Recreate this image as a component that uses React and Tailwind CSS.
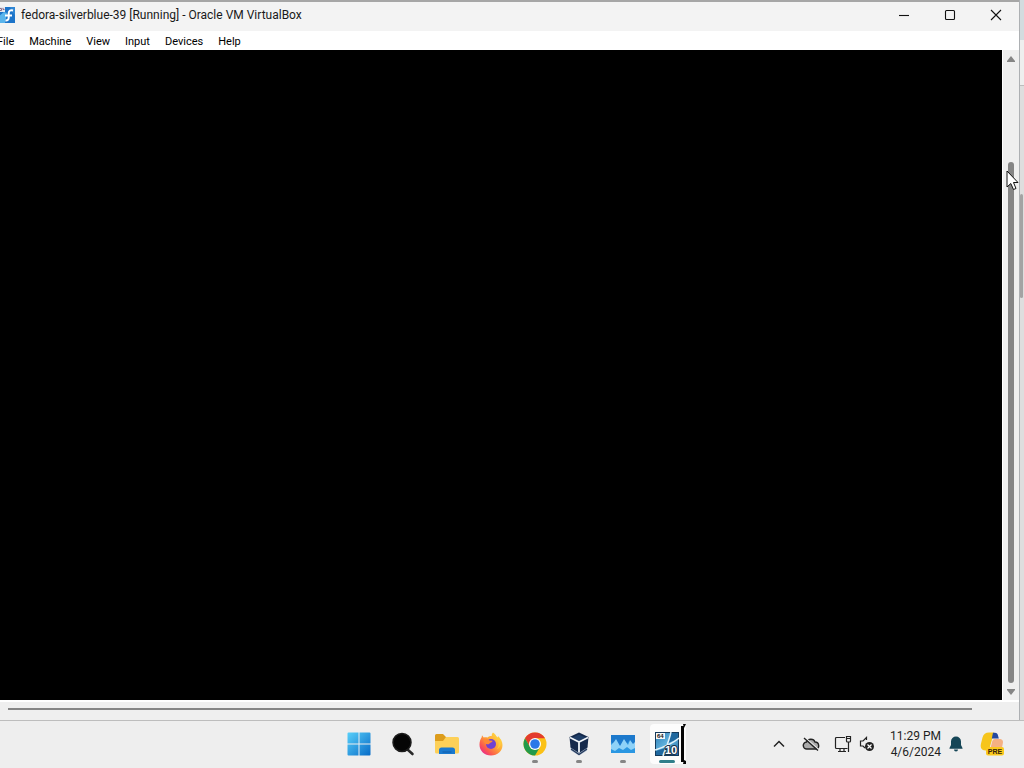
import React from 'react';

const MENUS = ['File', 'Machine', 'View', 'Input', 'Devices', 'Help'];

const VmIcon = () => (
  <svg viewBox="0 0 16 16" className="-ml-px h-4 w-4 shrink-0" aria-hidden="true">
    <rect width="16" height="16" fill="#1c74c9" />
    <path d="M0 16V9l5-4 3 1-2 10z" fill="#58b4ec" />
    <path d="M11 0h5v8l-2-2z" fill="#2f86d4" />
    <path d="M14 3.500c-3-.8-4.300.6-4.300 3v4c0 2-1 3.200-3.200 3M6 8.500h7" fill="none" stroke="#fff" strokeWidth="2" />
    <path d="M0 0h6v5H0z" fill="#e3e6ee" />
    <path d="M1 1.500h1.500v2H1M4 1v1.500h1.500" fill="none" stroke="#8c6c86" />
  </svg>
);

const StartIcon = () => (
  <svg viewBox="0 0 24 24" className="h-6 w-6" aria-hidden="true">
    <defs>
      <linearGradient id="start" x1="0" y1="0" x2="24" y2="24" gradientUnits="userSpaceOnUse">
        <stop offset="0" stopColor="#5ad2fb" />
        <stop offset="1" stopColor="#0669c6" />
      </linearGradient>
    </defs>
    <path fill="url(#start)" d="M.5 1.500A1 1 0 0 1 1.500.5H11.500v11H.5zM12.500.5h10a1 1 0 0 1 1 1v10h-11zM.5 12.500h11v11h-10a1 1 0 0 1-1-1zM12.500 12.500h11v10a1 1 0 0 1-1 1h-10z" />
  </svg>
);

const SearchIcon = () => (
  <svg viewBox="0 0 24 24" className="h-6 w-6" aria-hidden="true">
    <path d="M16.500 17.500l5 4.500" stroke="#2a2a2a" strokeWidth="2.600" strokeLinecap="round" />
    <circle cx="11" cy="10.500" r="9" fill="#050505" stroke="#1c1c1c" strokeWidth="1.500" />
  </svg>
);

const FolderIcon = () => (
  <svg viewBox="0 0 26 24" className="h-6 w-[26px]" aria-hidden="true">
    <path d="M1 3.500A1.500 1.500 0 0 1 2.500 2H9l3 3h8v6H1z" fill="#dc9c1c" />
    <path d="M1 9h8l3-4h11.500A1.500 1.500 0 0 1 25 6.500v13.500a1.500 1.500 0 0 1-1.500 1.500h-21A1.500 1.500 0 0 1 1 20z" fill="#fdd058" />
    <path d="M5 22v-4.500A2.500 2.500 0 0 1 7.500 15.500h11a2.500 2.500 0 0 1 2.500 2.500V22z" fill="#1979cf" />
    <path d="M8.500 20h9" stroke="#1466b6" strokeWidth="1.500" />
  </svg>
);

const FirefoxIcon = () => (
  <svg viewBox="0 0 24 24" className="h-6 w-6" aria-hidden="true">
    <defs>
      <linearGradient id="fox" x1="21" y1="3" x2="4" y2="21" gradientUnits="userSpaceOnUse">
        <stop offset="0" stopColor="#ffe04a" />
        <stop offset=".45" stopColor="#ffa436" />
        <stop offset=".8" stopColor="#fb5a4e" />
        <stop offset="1" stopColor="#ec2f86" />
      </linearGradient>
    </defs>
    <path d="M14 .5c2 1.200 3 2.700 3.400 4.300.8.300 1.400.7 1.800 1.200l-.4-2c2.800 2.300 4.700 5.500 4.700 9 0 6.200-5 10.500-11.500 10.500S.5 18.800.5 12.700c0-3 .9-5.600 2.200-7.400l.3-2 1.700 2.200c1.300-.5 2.600-.5 3.800 0C9.800 4.400 11 4 12.800 4 12.500 2.800 13 1.500 14 .5z" fill="url(#fox)" />
    <circle cx="12" cy="12" r="5" fill="#7142d1" />
    <path d="M4.500 7.500c2-1.400 4.500-1 6 1l3 .3c0 1.900-3 1.900-3.300 3.200-2.500 1-6-1-5.700-4.500z" fill="#ff8b36" />
    <path d="M14 1c0 3 4.500 5 5.500 9 .7 3-.2 5.500-2 7.500 6-3.200 5.500-9.500 1.500-13.300l.2 2C17.500 4 15.500 3.500 14 1z" fill="#ffcb3d" />
  </svg>
);

const ChromeIcon = () => (
  <svg viewBox="0 0 24 24" className="h-6 w-6" aria-hidden="true">
    <circle cx="12" cy="12" r="11.500" fill="#fbc116" />
    <path d="M2 6.300A11.500 11.500 0 0 1 22 6.300H12L7 15z" fill="#e33b2e" />
    <path d="M2 6.300A11.500 11.500 0 0 0 12 23.500l5-8.600-5 2.800-5-2.800z" fill="#239a4b" />
    <circle cx="12" cy="12" r="6" fill="#fff" />
    <circle cx="12" cy="12" r="4.800" fill="#2a78e8" />
  </svg>
);

const VirtualBoxIcon = () => (
  <svg viewBox="0 0 24 24" className="h-6 w-6" aria-hidden="true">
    <path d="M3.500 14L12 19l8.500-5-.5 4.500-8 5-8-5z" fill="#a3b3c9" />
    <path d="M12 .5L21.500 5l-1 10.500L12 21l-8.500-5.500L2.500 5z" fill="#14294b" />
    <path d="M12 2.500l7 3.300-7 3.400-7-3.400z" fill="#1e3d66" />
    <path d="M3 5.500l9 4.500 9-4.500M12 10v10.500" fill="none" stroke="#eef3f8" strokeWidth="1.800" />
    <path d="M4 17l8 5.500 8-5.500" fill="none" stroke="#24385a" strokeWidth="1.200" />
  </svg>
);

const MonitorAppIcon = () => (
  <svg viewBox="0 0 24 20" className="h-5 w-6" aria-hidden="true">
    <path d="M0 1h24v18H0z" fill="#2a97e2" />
    <path d="M0 1h24v8l-3 2-3-4-3 4-3-3-3 5-4-6-2 4-3-3z" fill="#1c79cc" />
    <path d="M0 11l3-3 2-3 4 7 4-7 4 6 2-5 3 4 2-2v6l-4 2-4-3-4 3-4-2-4 3-4-2z" fill="#8ed2f8" />
  </svg>
);

const GuestIcon = () => (
  <svg viewBox="0 0 24 24" className="h-6 w-6" aria-hidden="true">
    <defs>
      <linearGradient id="pane" x1="0" y1="0" x2="24" y2="24" gradientUnits="userSpaceOnUse">
        <stop offset="0" stopColor="#2b7ab4" />
        <stop offset=".5" stopColor="#63b4de" />
        <stop offset="1" stopColor="#1d5f95" />
      </linearGradient>
    </defs>
    <path d="M0 0h24v24H0z" fill="#153a5b" />
    <path d="M1 1h22v22H1z" fill="url(#pane)" />
    <path d="M15 1h8v6l-10 4zM1 19l9-3-3 7H1z" fill="#1f689f" />
    <path d="M16 0c-2 9-5 16-8 24M0 18C9 15 17 12 24 6" fill="none" stroke="#e4f3fa" strokeWidth="1.500" />
    <path d="M1 1h9v6H1z" fill="#f7f7f7" />
    <text x="2" y="6" fontSize="6" fontWeight="700" fontFamily="Liberation Sans, sans-serif" fill="#111">64</text>
    <text x="10" y="22" fontSize="11" fontWeight="700" fontFamily="Liberation Sans, sans-serif" fill="#fff" stroke="#16324c" strokeWidth="2" paintOrder="stroke">10</text>
  </svg>
);

const APPS = [
  { name: 'Start', Icon: StartIcon },
  { name: 'Search', Icon: SearchIcon },
  { name: 'File Explorer', Icon: FolderIcon },
  { name: 'Firefox', Icon: FirefoxIcon },
  { name: 'Chrome', Icon: ChromeIcon, open: true },
  { name: 'VirtualBox', Icon: VirtualBoxIcon, open: true },
  { name: 'Resource Monitor', Icon: MonitorAppIcon, open: true },
  { name: 'Virtual machine', Icon: GuestIcon, active: true },
];

const WindowButton = ({ label, children }) => (
  <button type="button" aria-label={label} className="flex h-7 w-[46px] items-center justify-center">
    <svg viewBox="0 0 12 12" className="h-3 w-3" fill="none" stroke="#111" strokeWidth="1.100">
      {children}
    </svg>
  </button>
);

const TitleBar = () => (
  <header className="flex h-[31px] shrink-0 items-center border-t-2 border-[#a6a6a6] bg-[#f3f3f3] pb-[3px]">
    <VmIcon />
    <h1 className="ml-1.5 flex-1 truncate text-[12px] leading-4 text-[#191919]">
      fedora-silverblue-39 [Running] - Oracle VM VirtualBox
    </h1>
    <WindowButton label="Minimize">
      <path d="M1 6.500h10" />
    </WindowButton>
    <WindowButton label="Maximize">
      <rect x="1.500" y="1.500" width="9" height="9" rx="1" />
    </WindowButton>
    <WindowButton label="Close">
      <path d="M1 1l10 10M11 1L1 11" />
    </WindowButton>
  </header>
);

const MenuBar = () => (
  <nav className="-ml-[3px] flex h-[19px] shrink-0 items-center gap-[15px] bg-white pt-0.5">
    {MENUS.map((menu) => (
      <button key={menu} type="button" className="text-[11px] leading-4 text-black">
        {menu}
      </button>
    ))}
  </nav>
);

const VerticalScrollbar = () => (
  <div className="flex w-[17px] shrink-0 flex-col items-center border-l border-white bg-[#efefef] pt-[3px] pb-0.5">
    <button type="button" aria-label="Scroll up" className="flex h-3 w-3 items-center justify-center">
      <svg viewBox="0 0 8 6" className="h-1.5 w-2">
        <path d="M4 0l4 5v1H0V5z" fill="#858585" />
      </svg>
    </button>
    <div className="flex w-1.5 flex-1 flex-col pt-[97px]">
      <div className="flex-1 rounded-full bg-[#858585]" />
    </div>
    <button type="button" aria-label="Scroll down" className="mt-[3px] flex h-3 w-3 items-center justify-center">
      <svg viewBox="0 0 8 6" className="h-1.5 w-2">
        <path d="M4 6l4-5V0H0v1z" fill="#858585" />
      </svg>
    </button>
  </div>
);

const TrayIcons = () => (
  <>
    <button type="button" aria-label="Show hidden icons" className="flex h-8 w-6 items-center justify-center">
      <svg viewBox="0 0 12 8" className="h-2 w-3" fill="none" stroke="#222" strokeWidth="1.500">
        <path d="M1 6.500l5-5 5 5" />
      </svg>
    </button>
    <button type="button" aria-label="OneDrive" className="ml-2 flex h-8 w-6 items-center justify-center">
      <svg viewBox="0 0 18 14" className="h-3.5 w-[18px]" fill="none" stroke="#222" strokeWidth="1.400">
        <path d="M5 12a3.500 3.500 0 0 1-.5-7C6 1.500 11.500 1 13 5c4.500 0 5 7 1 7z" fill="#aaa" />
        <path d="M3.500 1l13 11.500" stroke="#eee" strokeWidth="1.500" />
        <path d="M2 1l14 12.500" />
      </svg>
    </button>
    <button type="button" aria-label="Network" className="ml-2 flex h-8 w-6 items-center justify-center">
      <svg viewBox="0 0 18 18" className="h-[18px] w-[18px]" fill="none" stroke="#222" strokeWidth="1.200">
        <path d="M11 2.500H2.500a1 1 0 0 0-1 1v9a1 1 0 0 0 1 1h11M6 13.500V16M10 13.500V16M4 16.500h8M14.500 7v10" />
        <path d="M12.500 1.500h4V6a1 1 0 0 1-1 1h-2a1 1 0 0 1-1-1zM12.500 3.500h4" />
      </svg>
    </button>
    <button type="button" aria-label="Volume muted" className="flex h-8 w-6 items-center justify-center">
      <svg viewBox="0 0 16 16" className="h-4 w-4" fill="none" stroke="#222" strokeWidth="1.200">
        <path d="M7.500 4V1.500L4 5H1.500v5H4l2 2" />
        <circle cx="10.500" cy="10.500" r="4.500" fill="#222" stroke="none" />
        <path d="M8.500 8.500l4 4M12.500 8.500l-4 4" stroke="#fff" />
      </svg>
    </button>
  </>
);

const Tray = () => (
  <div className="flex items-center justify-end pr-5 pb-px">
    <TrayIcons />
    <time className="ml-[11px] text-right text-[12px] leading-4 text-[#1f1f1f]">
      <span className="block">11:29 PM</span>
      <span className="block">4/6/2024</span>
    </time>
    <button type="button" aria-label="Notifications" className="ml-2 flex h-8 w-[14px] items-center justify-center">
      <svg viewBox="0 0 14 16" className="h-4 w-3.5" fill="#164657">
        <path d="M7 .5a5 5 0 0 1 5 5V9l1.500 3v.8H.5V12L2 9V5.500a5 5 0 0 1 5-5zM5 13.500h4a2 2 0 0 1-4 0z" />
      </svg>
    </button>
    <button type="button" aria-label="Copilot preview" className="ml-[17px] flex h-8 w-6 items-center justify-center">
      <svg viewBox="0 0 24 24" className="h-6 w-6">
        <path d="M9 .5h5l-4 14c-.8 3-2 4-4.500 4-4 0-5.500-3-4.500-7l1.500-6C3.500 2 5.500.5 9 .5z" fill="#f6c51c" />
        <path d="M13 .7h2c1.500 0 2.300.7 2.800 2l1 3.800h-7z" fill="#2449a0" />
        <path d="M15 7h4c3.500 0 4.500 2 3.800 4.500L21.500 18H10l2-8c.5-2 1.500-3 3-3z" fill="#f5b183" />
        <rect x="6" y="15" width="18" height="8.500" rx="2" fill="#fbc91d" />
        <text x="15" y="22" fontSize="7" fontWeight="700" textAnchor="middle" fontFamily="Liberation Sans, sans-serif" fill="#33230b">PRE</text>
      </svg>
    </button>
  </div>
);

const TaskbarApp = ({ name, Icon, open, active }) => (
  <button
    type="button"
    aria-label={name}
    className="relative flex h-[47px] w-11 items-center justify-center pb-0.5"
  >
    {active && (
      <svg viewBox="0 0 40 40" className="absolute top-[3px] left-[5px] h-10 w-10" aria-hidden="true">
        <rect width="36" height="40" rx="4" fill="#fcfcfc" />
        <path d="M31 2h3v36h-3zM33 0h3l-2 4zM34 36l2 1v3h-3z" fill="#050505" />
      </svg>
    )}
    <span className="relative">
      <Icon />
    </span>
    {open && <span className="absolute bottom-[5px] h-[3px] w-1.5 rounded-full bg-[#858585]" />}
    {active && <span className="absolute bottom-[5px] h-[3px] w-4 rounded-full bg-[#2f7f8a]" />}
  </button>
);

const Taskbar = () => (
  <footer className="grid h-12 shrink-0 grid-cols-[1fr_auto_1fr] border-t border-[#bdbdbd] bg-[#eeeeee]">
    <div />
    <div className="flex pl-px">
      {APPS.map((app) => (
        <TaskbarApp key={app.name} {...app} />
      ))}
    </div>
    <Tray />
  </footer>
);

const App = () => (
  <div className="relative flex h-screen flex-col overflow-hidden bg-[#eeeeee] font-['Roboto','Open_Sans',sans-serif]">
    <div className="flex min-h-0 flex-1">
      <main className="flex min-w-0 flex-1 flex-col overflow-hidden bg-white">
        <TitleBar />
        <MenuBar />
        <div className="flex min-h-0 flex-1">
          <div className="flex-1 bg-black" />
          <VerticalScrollbar />
        </div>
        <div className="flex h-5 shrink-0 items-center border-t-2 border-white bg-[#efefef] pr-[47px] pb-1 pl-2">
          <div className="h-0.5 flex-1 bg-[#858585]" />
        </div>
      </main>
      {/* Sliver of the window behind */}
      <aside className="flex w-[5px] shrink-0 flex-col border-l border-[#adb0b3] bg-[#dedede]">
        <div className="h-10 bg-[#d3dcdf]" />
        <div className="h-[46px] border-b border-[#bcbcbc] bg-[#eeeeee]" />
        <div className="mt-[108px] h-[104px] w-[3px] rounded-full bg-[#a3a3a3]" />
      </aside>
    </div>
    <Taskbar />
    <svg viewBox="0 0 13 20" className="absolute top-[170px] right-[5px] h-5 w-[13px]" aria-hidden="true">
      <path d="M1 1v16l3.800-3.500L7.500 19.500l2.500-1L7.500 12.500H12z" fill="#fff" stroke="#111" />
    </svg>
  </div>
);

export default App;
